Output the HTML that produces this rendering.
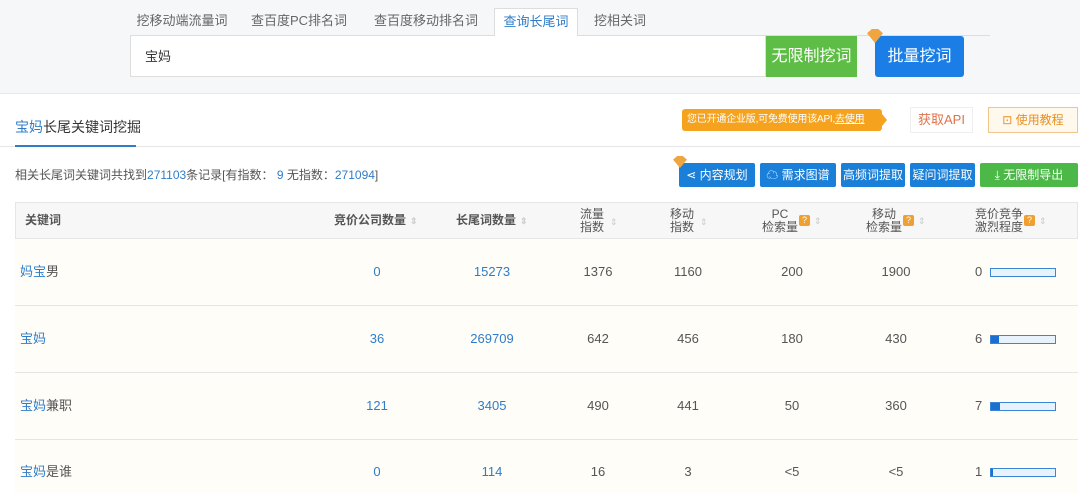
<!DOCTYPE html>
<html style="overflow:hidden"><head><meta charset="utf-8"><style>
*{margin:0;padding:0;box-sizing:border-box}
html,body{width:1080px;height:493px;overflow:hidden}
body{background:#f6f7f9;font-family:"Liberation Sans","Noto Sans CJK SC",sans-serif;font-size:13px;color:#555;position:relative;line-height:16px}
.a{position:absolute}
.tab{position:absolute;top:8px;height:28px;line-height:26px;font-size:13px;color:#666;text-align:center}
.btn{position:absolute;top:163px;height:24px;line-height:24px;color:#fff;font-size:12px;text-align:center;border-radius:2px;background:#1a7fd8}
.blue{color:#2f7dc8}
.row{position:absolute;left:15px;width:1063px;height:67px;border-bottom:1px solid #e6e6e6;background:#fffdf8}
.c{position:absolute;text-align:center;width:80px;margin-left:-40px}
.h{position:absolute;font-size:12px;color:#555;line-height:13px;text-align:center}
.q{display:inline-block;width:11px;height:11px;background:#f0a030;color:#fff;font-size:9px;line-height:11px;text-align:center;border-radius:2px;vertical-align:middle}
.s{color:#ccc;font-size:9px;margin-left:4px}
.bar{position:absolute;left:990px;width:66px;height:9px;border:1px solid #3a86d6;background:#e8f2fc}
.bar i{display:block;height:100%;background:#1a6fd0}
</style></head><body>
<div class="a" style="left:130px;top:35px;width:860px;height:1px;background:#ddd"></div>
<div class="tab" style="left:130px;width:104px">挖移动端流量词</div>
<div class="tab" style="left:244px;width:110px">查百度PC排名词</div>
<div class="tab" style="left:364px;width:124px">查百度移动排名词</div>
<div class="tab" style="left:494px;width:84px;background:#fff;border:1px solid #ddd;border-bottom:none;color:#2f7dc8;height:29px">查询长尾词</div>
<div class="tab" style="left:584px;width:72px">挖相关词</div>
<div class="a" style="left:130px;top:36px;width:636px;height:41px;background:#fff;border:1px solid #ddd;border-top:none;padding-left:14px;line-height:41px;color:#333">宝妈</div>
<div class="a" style="left:766px;top:36px;width:91px;height:41px;background:#5dbd45;color:#fff;font-size:16px;text-align:center;line-height:41px">无限制挖词</div>
<div class="a" style="left:875px;top:36px;width:89px;height:41px;background:#1a7ee6;border-radius:3px;color:#fff;font-size:16px;text-align:center;line-height:41px">批量挖词</div>
<div class="a" style="left:867px;top:29px;width:16px;height:14px;background:#f0a640;clip-path:polygon(0 30%,30% 0,70% 0,100% 30%,50% 100%)"></div>
<div class="a" style="left:0;top:93px;width:1080px;height:400px;background:#fff;border-top:1px solid #e8e8e8"></div>
<div class="a" style="left:15px;top:119px;font-size:14px;color:#333"><span class="blue">宝妈</span>长尾关键词挖掘</div>
<div class="a" style="left:0;top:146px;width:1080px;height:1px;background:#e6e6e6"></div>
<div class="a" style="left:15px;top:145px;width:121px;height:2px;background:#2f7dc8"></div>
<div class="a" style="left:682px;top:109px;width:200px;height:22px;background:#f5a31e;border-radius:3px;color:#fff;font-size:10px;line-height:22px;padding-left:5px;white-space:nowrap;overflow:hidden;letter-spacing:-0.2px">您已开通企业版,可免费使用该API,<u>去使用</u></div>
<div class="a" style="left:882px;top:114px;border:6px solid transparent;border-left:5px solid #f5a31e"></div>
<div class="a" style="left:910px;top:107px;width:63px;height:26px;border:1px solid #eee;color:#e0714a;line-height:24px;text-align:center">获取API</div>
<div class="a" style="left:988px;top:107px;width:90px;height:26px;border:1px solid #f0c58a;background:#fff8ec;color:#e89020;line-height:24px;text-align:center;font-size:12px">⊡ 使用教程</div>
<div class="a" style="left:15px;top:167px;font-size:12px;color:#555">相关长尾词关键词共找到<span class="blue">271103</span>条记录[有指数：<span class="blue"> 9 </span> 无指数：<span class="blue">271094</span>]</div>
<div class="btn" style="left:679px;width:76px">⋖ 内容规划</div>
<div class="a" style="left:673px;top:156px;width:14px;height:12px;background:#f0a640;clip-path:polygon(0 30%,30% 0,70% 0,100% 30%,50% 100%)"></div>
<div class="btn" style="left:760px;width:76px">☁ 需求图谱</div>
<div class="btn" style="left:841px;width:64px">高频词提取</div>
<div class="btn" style="left:910px;width:65px">疑问词提取</div>
<div class="btn" style="left:980px;width:98px;background:#4cb848">⤓ 无限制导出</div>
<div class="a" style="left:15px;top:202px;width:1063px;height:37px;background:#f7f7f7;border:1px solid #e6e6e6"></div>
<div class="h" style="left:25px;top:214px;font-weight:bold">关键词</div>
<div class="h" style="left:334px;top:214px;font-weight:bold">竞价公司数量<span class="s">⇕</span></div>
<div class="h" style="left:456px;top:214px;font-weight:bold">长尾词数量<span class="s">⇕</span></div>
<div class="h" style="left:580px;top:208px">流量<br>指数</div><span class="a s" style="left:606px;top:214px">⇕</span>
<div class="h" style="left:670px;top:208px">移动<br>指数</div><span class="a s" style="left:696px;top:214px">⇕</span>
<div class="h" style="left:762px;top:208px">PC<br>检索量</div><span class="a" style="left:799px;top:212px"><span class="q">?</span><span class="s">⇕</span></span>
<div class="h" style="left:866px;top:208px">移动<br>检索量</div><span class="a" style="left:903px;top:212px"><span class="q">?</span><span class="s">⇕</span></span>
<div class="h" style="left:975px;top:208px;text-align:left">竞价竞争<br>激烈程度</div><span class="a" style="left:1024px;top:212px"><span class="q">?</span><span class="s">⇕</span></span>

<div class="row" style="top:239px"></div>
<div class="row" style="top:306px"></div>
<div class="row" style="top:373px"></div>
<div class="row" style="top:440px"></div>

<div class="a blue" style="left:20px;top:264px">妈宝<span style="color:#555">男</span></div>
<div class="c blue" style="left:377px;top:264px">0</div><div class="c blue" style="left:492px;top:264px">15273</div>
<div class="c" style="left:598px;top:264px">1376</div><div class="c" style="left:688px;top:264px">1160</div><div class="c" style="left:792px;top:264px">200</div><div class="c" style="left:896px;top:264px">1900</div>
<div class="a" style="left:975px;top:264px">0</div><div class="bar" style="top:268px"></div>

<div class="a blue" style="left:20px;top:331px">宝妈</div>
<div class="c blue" style="left:377px;top:331px">36</div><div class="c blue" style="left:492px;top:331px">269709</div>
<div class="c" style="left:598px;top:331px">642</div><div class="c" style="left:688px;top:331px">456</div><div class="c" style="left:792px;top:331px">180</div><div class="c" style="left:896px;top:331px">430</div>
<div class="a" style="left:975px;top:331px">6</div><div class="bar" style="top:335px"><i style="width:8px"></i></div>

<div class="a blue" style="left:20px;top:398px">宝妈<span style="color:#555">兼职</span></div>
<div class="c blue" style="left:377px;top:398px">121</div><div class="c blue" style="left:492px;top:398px">3405</div>
<div class="c" style="left:598px;top:398px">490</div><div class="c" style="left:688px;top:398px">441</div><div class="c" style="left:792px;top:398px">50</div><div class="c" style="left:896px;top:398px">360</div>
<div class="a" style="left:975px;top:398px">7</div><div class="bar" style="top:402px"><i style="width:9px"></i></div>

<div class="a blue" style="left:20px;top:464px">宝妈<span style="color:#555">是谁</span></div>
<div class="c blue" style="left:377px;top:464px">0</div><div class="c blue" style="left:492px;top:464px">114</div>
<div class="c" style="left:598px;top:464px">16</div><div class="c" style="left:688px;top:464px">3</div><div class="c" style="left:792px;top:464px">&lt;5</div><div class="c" style="left:896px;top:464px">&lt;5</div>
<div class="a" style="left:975px;top:464px">1</div><div class="bar" style="top:468px"><i style="width:2px"></i></div>
</body></html>
